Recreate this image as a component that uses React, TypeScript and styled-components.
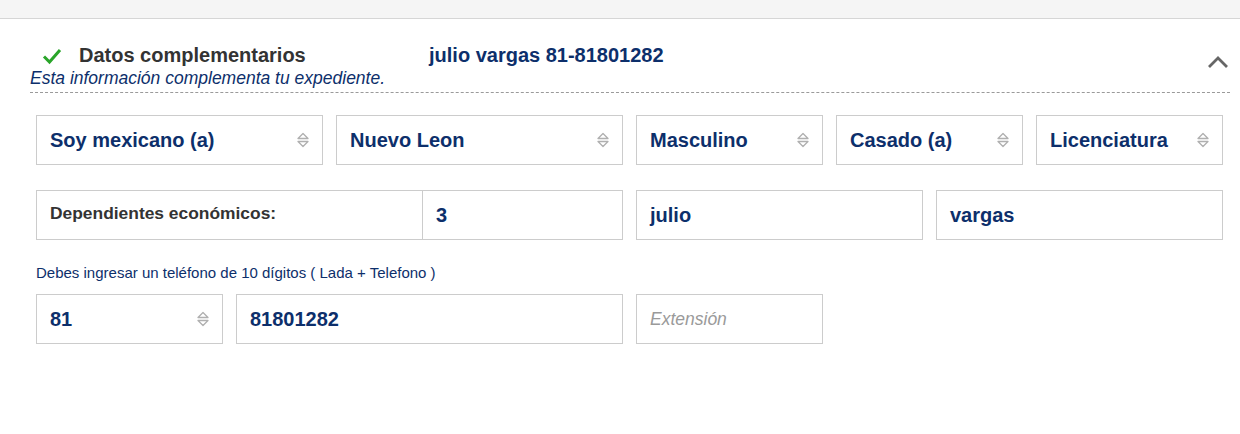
import React from "react";
import styled, { createGlobalStyle } from "styled-components";

const Global = createGlobalStyle`
  html, body { margin: 0; padding: 0; background: #fff; }
  body { font-family: "Liberation Sans", Arial, sans-serif; }
  * { box-sizing: border-box; }
`;

const TopBar = styled.div`
  height: 19px;
  background: #f5f5f5;
  border-bottom: 1px solid #d6d6d6;
`;

const Section = styled.section`
  padding: 23px 10px 0 30px;
`;

const Header = styled.div`
  border-bottom: 1px dashed #9a9a9a;
  padding-bottom: 5px;
  position: relative;
`;

const TitleRow = styled.div`
  display: flex;
  align-items: center;
  height: 27px;
`;

const Check = styled.svg`
  width: 20px;
  height: 18px;
  margin-left: 12px;
  margin-right: 17px;
`;

const Title = styled.h2`
  margin: 0;
  font-size: 20px;
  font-weight: bold;
  color: #333;
  width: 350px;
`;

const Summary = styled.span`
  font-size: 20px;
  font-weight: bold;
  color: #0d2f6b;
`;

const Subtitle = styled.p`
  margin: 0;
  font-size: 17.5px;
  font-style: italic;
  color: #0d2f6b;
  line-height: 18px;
`;

const Chevron = styled.svg`
  position: absolute;
  right: 1px;
  top: 13px;
  width: 22px;
  height: 14px;
`;

const Form = styled.div`
  padding: 22px 8px 0 6px;
`;

const Grid = styled.div<{ $mt?: number }>`
  display: grid;
  grid-template-columns: repeat(12, 87px);
  column-gap: 13px;
  margin-top: ${(p) => p.$mt ?? 0}px;
`;

const Field = styled.div<{ $span: number }>`
  grid-column: span ${(p) => p.$span};
  height: 50px;
  border: 1px solid #cccccc;
  display: flex;
  align-items: center;
  padding: 0 13px;
  font-size: 20px;
  font-weight: bold;
  color: #0d2f6b;
  background: #fff;
`;

const Value = styled.span`
  flex: 1;
`;

const Placeholder = styled.span`
  font-size: 17.5px;
  font-style: italic;
  font-weight: normal;
  color: #9a9a9a;
`;

const Split = styled.div`
  grid-column: span 6;
  height: 50px;
  border: 1px solid #cccccc;
  display: grid;
  grid-template-columns: 386px 1fr;
`;

const SplitLabel = styled.div`
  border-right: 1px solid #cccccc;
  display: flex;
  align-items: center;
  padding: 0 13px 4px;
  font-size: 17.4px;
  font-weight: bold;
  color: #333;
`;

const SplitValue = styled.div`
  display: flex;
  align-items: center;
  padding: 0 13px;
  font-size: 20px;
  font-weight: bold;
  color: #0d2f6b;
`;

const Help = styled.p`
  margin: 25px 0 13px;
  font-size: 15px;
  color: #0d2f6b;
  line-height: 16px;
`;

const Arrows = () => (
  <svg width="14" height="18" viewBox="0 0 14 18" style={{ marginRight: -1 }}>
    <path d="M2 7.5 L7 2.5 L12 7.5 Z" fill="none" stroke="#b0b0b0" strokeWidth="1.3" strokeLinejoin="round" />
    <path d="M2 10.5 L7 15.5 L12 10.5 Z" fill="none" stroke="#b0b0b0" strokeWidth="1.3" strokeLinejoin="round" />
  </svg>
);

const Select = ({ span, value }: { span: number; value: string }) => (
  <Field $span={span}>
    <Value>{value}</Value>
    <Arrows />
  </Field>
);

export default function App() {
  return (
    <>
      <Global />
      <TopBar />
      <Section>
        <Header>
          <TitleRow>
            <Check viewBox="0 0 20 18">
              <path d="M2 9.5 L7.5 15 L18 3" fill="none" stroke="#2aa52a" strokeWidth="3" />
            </Check>
            <Title>Datos complementarios</Title>
            <Summary>julio vargas 81-81801282</Summary>
          </TitleRow>
          <Subtitle>Esta información complementa tu expediente.</Subtitle>
          <Chevron viewBox="0 0 22 14">
            <path d="M2 12 L11 3 L20 12" fill="none" stroke="#666" strokeWidth="2.8" />
          </Chevron>
        </Header>
        <Form>
          <Grid>
            <Select span={3} value="Soy mexicano (a)" />
            <Select span={3} value="Nuevo Leon" />
            <Select span={2} value="Masculino" />
            <Select span={2} value="Casado (a)" />
            <Select span={2} value="Licenciatura" />
          </Grid>
          <Grid $mt={25}>
            <Split>
              <SplitLabel>Dependientes económicos:</SplitLabel>
              <SplitValue>3</SplitValue>
            </Split>
            <Field $span={3}>julio</Field>
            <Field $span={3}>vargas</Field>
          </Grid>
          <Help>Debes ingresar un teléfono de 10 dígitos ( Lada + Telefono )</Help>
          <Grid>
            <Select span={2} value="81" />
            <Field $span={4}>81801282</Field>
            <Field $span={2}>
              <Placeholder>Extensión</Placeholder>
            </Field>
          </Grid>
        </Form>
      </Section>
    </>
  );
}
